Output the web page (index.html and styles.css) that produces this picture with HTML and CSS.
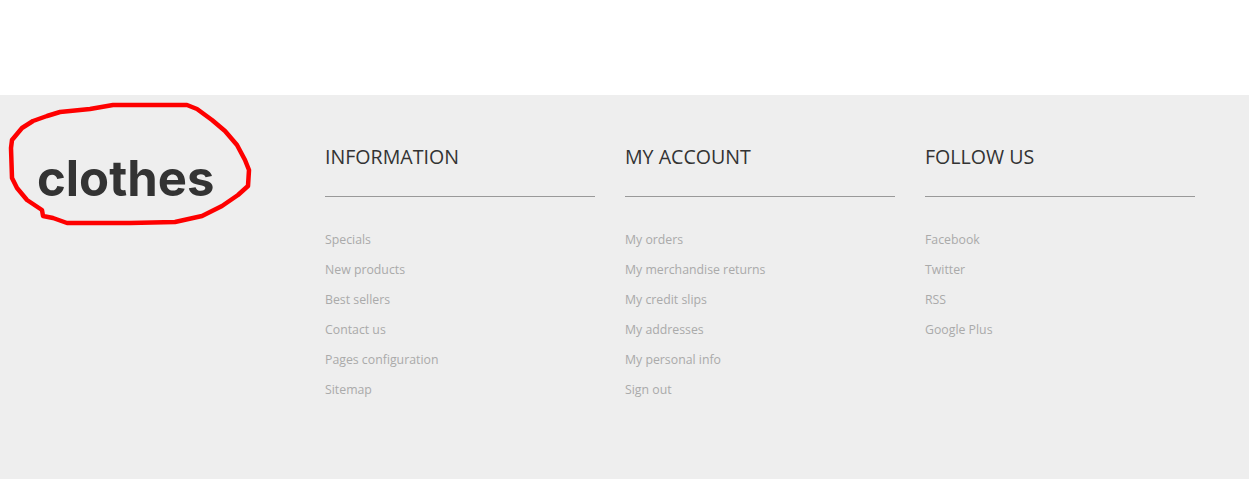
FILE: index.html
```html
<!DOCTYPE html>
<html lang="en">
	<head>
		<meta charset="UTF-8" />
		<title>clothes</title>
		<link rel="stylesheet" href="styles.css">
	</head>
	<body>
		<div class="top-space"></div>
		<footer class="footer">
			<div class="footer-logo">
				<a href="#" class="logo-text">clothes</a>
				<!-- red scribble round the logo -->
				<svg class="scribble" viewBox="0 0 270 145" width="270" height="145">
					<path d="M125 10 L187 10 L197 14 L212 25 L225 36 L237 50 L245 65 L249 75 L248 91 L238 100 L222 111 L202 121 L175 127 L130 128 L67 128 L53 123 L43 121 L42 115 L27 105 L17 93 L12 83 L11 53 L12 45 L22 33 L33 26 L47 21 L60 17 L90 14 L113 10 Z" fill="none" stroke="#fe0000" stroke-width="4.5" stroke-linejoin="round" />
				</svg>
			</div>
			<div class="footer-col">
				<h4>INFORMATION</h4>
				<ul>
					<li><a href="#">Specials</a></li>
					<li><a href="#">New products</a></li>
					<li><a href="#">Best sellers</a></li>
					<li><a href="#">Contact us</a></li>
					<li><a href="#">Pages configuration</a></li>
					<li><a href="#">Sitemap</a></li>
				</ul>
			</div>
			<div class="footer-col">
				<h4>MY ACCOUNT</h4>
				<ul>
					<li><a href="#">My orders</a></li>
					<li><a href="#">My merchandise returns</a></li>
					<li><a href="#">My credit slips</a></li>
					<li><a href="#">My addresses</a></li>
					<li><a href="#">My personal info</a></li>
					<li><a href="#">Sign out</a></li>
				</ul>
			</div>
			<div class="footer-col">
				<h4>FOLLOW US</h4>
				<ul>
					<li><a href="#">Facebook</a></li>
					<li><a href="#">Twitter</a></li>
					<li><a href="#">RSS</a></li>
					<li><a href="#">Google Plus</a></li>
				</ul>
			</div>
		</footer>
	</body>
</html>
```

FILE: styles.css
```css
body {
	margin: 0;
	background: #fff;
	font-family: "Open Sans", "Noto Sans", sans-serif;
	overflow: hidden;
}

.top-space {
	height: 95px;
}

.footer {
	display: flex;
	gap: 30px;
	height: 384px;
	padding-left: 37px;
	background: #eee;
	box-sizing: border-box;
}

.footer-logo {
	position: relative;
	width: 258px;
	padding-top: 54px;
}

.logo-text {
	font-family: "Inter", sans-serif;
	font-weight: 700;
	font-size: 49px;
	line-height: 60px;
	color: #333;
	text-decoration: none;
}

.scribble {
	position: absolute;
	top: 0;
	left: -37px;
}

.footer-col {
	width: 270px;
	padding-top: 47px;
}

.footer-col h4 {
	margin: 0;
	padding-bottom: 24px;
	height: 30px;
	line-height: 30px;
	font-size: 19.6px;
	font-weight: 400;
	color: #333;
	border-bottom: 1px solid #999;
}

.footer-col ul {
	list-style: none;
	margin: 0;
	padding: 28px 0 0;
}

.footer-col li {
	height: 30px;
	line-height: 30px;
	font-size: 12.3px;
}

.footer-col a {
	color: #aaa;
	text-decoration: none;
}
```
